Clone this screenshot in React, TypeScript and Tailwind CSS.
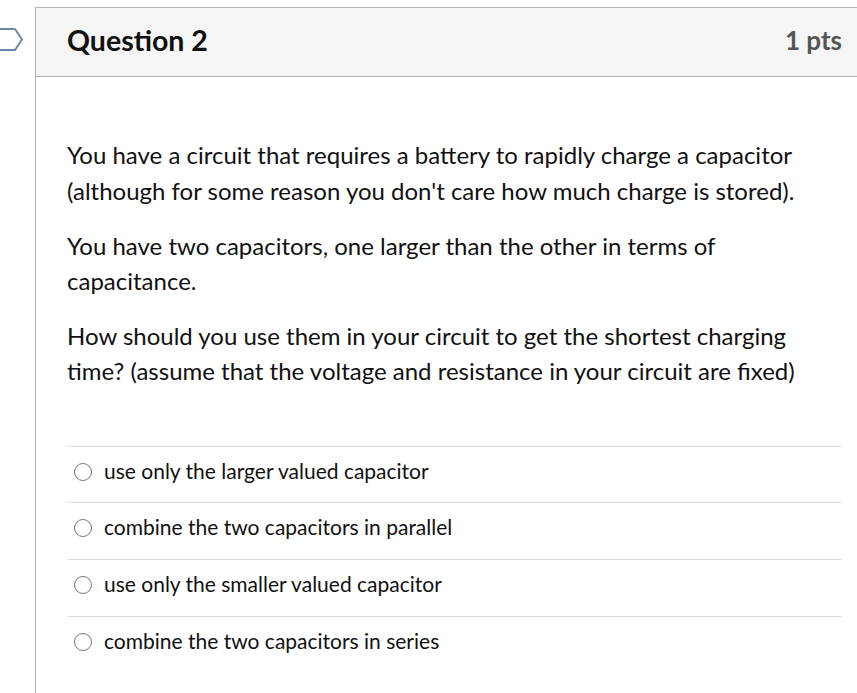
import React from "react";

const answers = [
  "use only the larger valued capacitor",
  "combine the two capacitors in parallel",
  "use only the smaller valued capacitor",
  "combine the two capacitors in series",
];

export default function App() {
  return (
    <div
      className="relative w-[857px] h-[693px] overflow-hidden bg-white text-[#111]"
      style={{ fontFamily: "Lato, 'Open Sans', sans-serif" }}
    >
      <svg
        className="absolute left-0 top-[27px]"
        width="26"
        height="26"
        viewBox="0 0 26 26"
      >
        <path
          d="M-6 2 H15 L22 12.5 L15 23 H-6 Z"
          fill="white"
          stroke="#6b87a3"
          strokeWidth="2"
          strokeLinejoin="round"
        />
      </svg>
      <div className="ml-[35px] mt-[7px] h-[686px] border-l border-t border-[#b3b3b3]">
        <div className="flex h-[69px] items-center justify-between border-b border-[#b3b3b3] bg-[#f5f5f5] pb-[4px] pl-[31px] pr-[15px]">
          <div className="text-[28.5px] font-bold text-[#111]">Question 2</div>
          <div className="text-[26px] font-bold text-[#555]">1 pts</div>
        </div>
        <div className="pl-[31px] pr-[15px] pt-[60px]">
          <div className="text-[24px] leading-[35.5px] text-[#111]">
            <p className="mb-[19.5px]">
              You have a circuit that requires a battery to rapidly charge a capacitor
              <br />
              (although for some reason you don't care how much charge is stored).
            </p>
            <p className="mb-[19px]">
              You have two capacitors, one larger than the other in terms of
              <br />
              capacitance.
            </p>
            <p>
              How should you use them in your circuit to get the shortest charging
              <br />
              time? (assume that the voltage and resistance in your circuit are fixed)
            </p>
          </div>
          <div className="mt-[57px]">
            {answers.map((a) => (
              <div
                key={a}
                className="flex h-[56.7px] items-start border-t border-[#dcdcdc] pt-[11px]"
              >
                <span className="ml-[7px] mr-[12px] mt-[5px] box-border h-[18px] w-[18px] rounded-full border-[1.5px] border-[#777] bg-white" />
                <span className="text-[21px] leading-[26px] text-[#111]">{a}</span>
              </div>
            ))}
          </div>
        </div>
      </div>
    </div>
  );
}
